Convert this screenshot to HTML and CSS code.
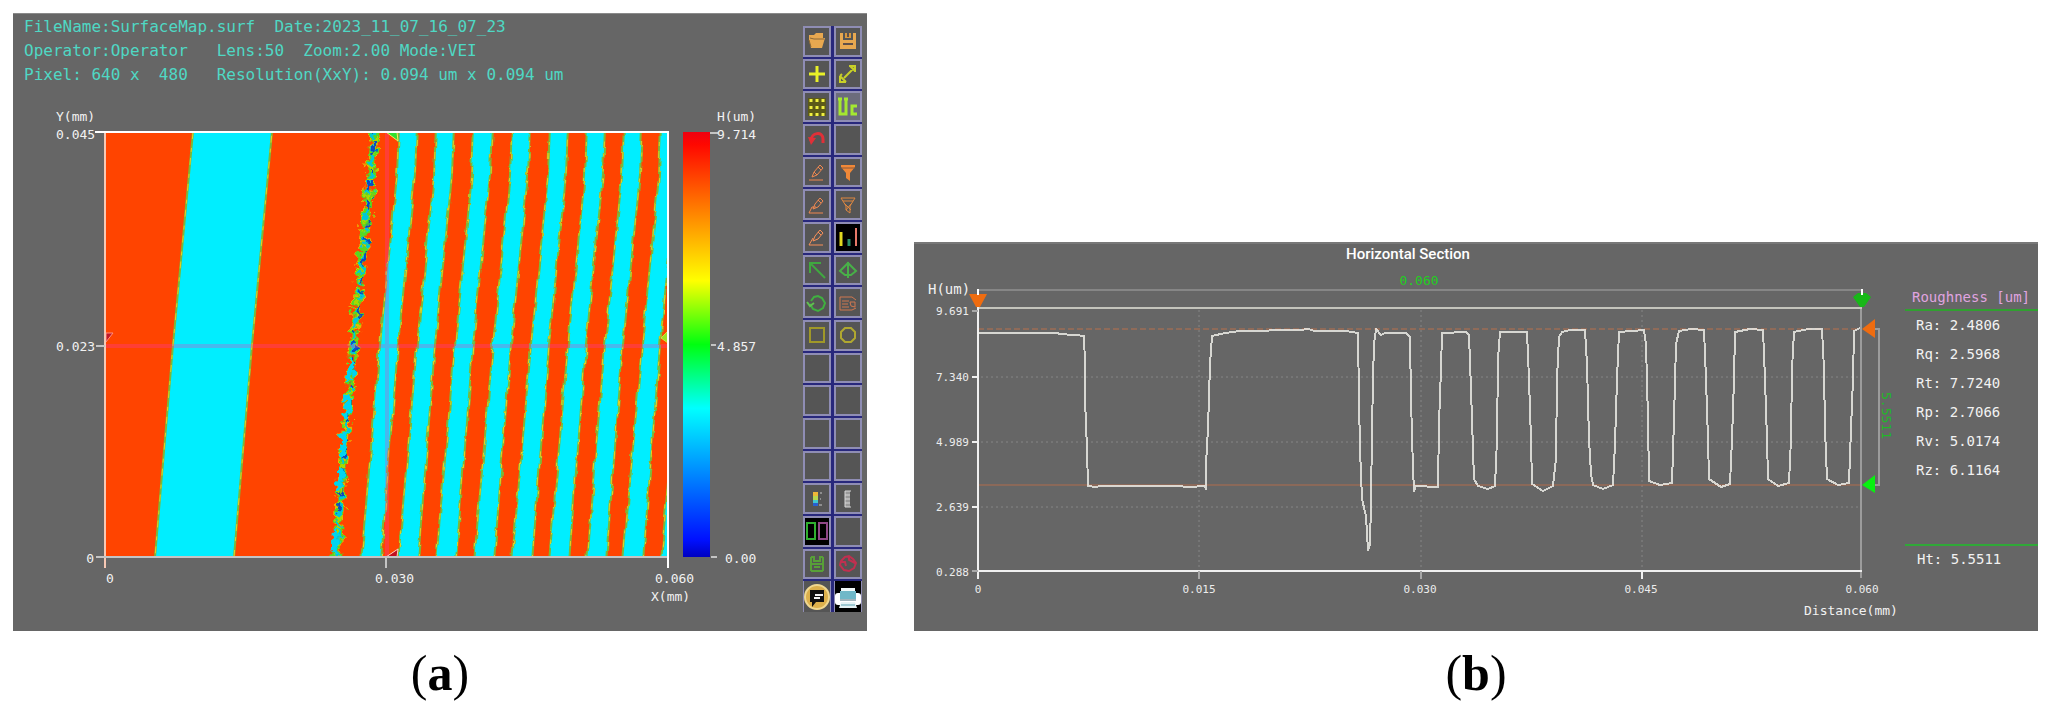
FILE: index.html
```html
<!DOCTYPE html>
<html lang="en">
<head>
<meta charset="utf-8">
<title>Surface map and horizontal section</title>
<link rel="stylesheet" href="styles.css">
</head>
<body>
<main class="figures">
  <figure class="figure figure-map">
    <div class="panel map-panel">
      <div class="map-main">
        <pre class="meta">FileName:SurfaceMap.surf  Date:2023_11_07_16_07_23
Operator:Operator   Lens:50  Zoom:2.00 Mode:VEI
Pixel: 640 x  480   Resolution(XxY): 0.094 um x 0.094 um</pre>
        <svg class="plot" viewBox="13 87 790 544" role="img" aria-label="Height map">
          <defs>
            <linearGradient id="heat" x1="0" y1="0" x2="0" y2="1">
              <stop offset="0" stop-color="#f00010"/>
              <stop offset=".03" stop-color="#ff0800"/>
              <stop offset=".35" stop-color="#ffff00"/>
              <stop offset=".5" stop-color="#00ff10"/>
              <stop offset=".65" stop-color="#00ffff"/>
              <stop offset=".96" stop-color="#0010ff"/>
              <stop offset="1" stop-color="#0000c0"/>
            </linearGradient>
            <clipPath id="area"><rect x="106" y="132" width="562" height="425"/></clipPath>
            <filter id="rough" x="-20%" y="-5%" width="140%" height="110%">
              <feTurbulence type="fractalNoise" baseFrequency=".06" numOctaves="2" seed="4"/>
              <feDisplacementMap in="SourceGraphic" scale="5" xChannelSelector="R" yChannelSelector="G"/>
            </filter>
            <filter id="rougher" x="-50%" y="-5%" width="200%" height="110%">
              <feTurbulence type="fractalNoise" baseFrequency=".15" numOctaves="2" seed="9"/>
              <feDisplacementMap in="SourceGraphic" scale="14" xChannelSelector="R" yChannelSelector="G"/>
            </filter>
            <g id="stripe">
              <path class="cold" d="M399 126L397 175L380 345L361 562H381L398 345L415 175L417 126Z"/>
              <path class="edge-g" d="M399 126L397 175L380 345L361 562M381 562L398 345L415 175L417 126"/>
              <path class="edge-y" d="M399 126L397 175L380 345L361 562M381 562L398 345L415 175L417 126"/>
            </g>
          </defs>
          <g clip-path="url(#area)">
            <rect class="hot" x="105" y="132" width="563" height="425"/>
            <path class="cold" d="M193 132L173 345L155 557H234L252 345L272 132Z"/>
            <path class="edge-g" d="M193 132L173 345L155 557M234 557L252 345L272 132"/>
            <path class="edge-y" d="M193 132L173 345L155 557M234 557L252 345L272 132"/>
            <g filter="url(#rough)">
              <use href="#stripe"/>
              <use href="#stripe" x="37"/>
              <use href="#stripe" x="75"/>
              <use href="#stripe" x="113"/>
              <use href="#stripe" x="151"/>
              <use href="#stripe" x="188"/>
              <use href="#stripe" x="225"/>
              <use href="#stripe" x="262"/>
              <use href="#stripe" x="300"/>
            </g>
            <g filter="url(#rougher)" fill="none">
              <path d="M376 128L364 240L355 330L344 450L336 560" stroke="#e8b800" stroke-width="10" stroke-dasharray="4 3 7 5 2 6"/>
              <path d="M376 128L364 240L355 330L344 450L336 560" stroke="#58d820" stroke-width="8" stroke-dasharray="11 1 6 2"/>
              <path d="M376 128L364 240L355 330L344 450L336 560" stroke="#a8d800" stroke-width="5" stroke-dasharray="4 7 9 5"/>
              <path d="M375 128L365 240L355 330L345 450L336 560" stroke="#00c8d8" stroke-width="4" stroke-dasharray="12 5 6 4"/>
              <path d="M375 128L366 240L356 330L346 450L337 520" stroke="#0848c0" stroke-width="3" stroke-dasharray="7 9 12 14 4 8"/>
              <path d="M352 360L343 450L339 500M336 530L334 560" stroke="#00d4f0" stroke-width="6" stroke-dasharray="22 14"/>
            </g>
            <path class="cross" d="M106 346H668M387 132V557"/>
            <path d="M386 132L398 141L397 132Z" fill="#30e030" stroke="#f0f060"/>
            <path d="M667 332L661 338L668 343" fill="#a0e020" stroke="#d0e040"/>
            <path d="M106 333H113L106 342Z" fill="#c01828" stroke="#ff9080"/>
            <path d="M386 557L398 549L397 557Z" fill="#c01020" stroke="#ffd0c0"/>
          </g>
          <path d="M105 132V568" stroke="#f6c8b4" stroke-width="2"/>
          <path d="M96 346H105M96 557H668M386 557V568M710 133H718M711 345H716M711 557H717" stroke="#c4c4c4" stroke-width="2"/>
          <path d="M95 132H668V568" fill="none" stroke="#fff" stroke-width="2"/>
          <rect x="683" y="132" width="27" height="425" fill="url(#heat)"/>
          <g class="ticks">
            <text x="56" y="121">Y(mm)</text>
            <text x="56" y="139">0.045</text>
            <text x="56" y="351">0.023</text>
            <text x="94" y="563" text-anchor="end">0</text>
            <text x="106" y="583">0</text>
            <text x="375" y="583">0.030</text>
            <text x="655" y="583">0.060</text>
            <text x="651" y="601">X(mm)</text>
            <text x="717" y="121">H(um)</text>
            <text x="717" y="139">9.714</text>
            <text x="717" y="351">4.857</text>
            <text x="725" y="563">0.00</text>
          </g>
        </svg>
      </div>
      <div class="toolbar" role="toolbar" aria-label="Tools">
        <button aria-label="Open"><svg viewBox="0 0 22 22"><path d="M3 5H8L10 3H17V8H19L16 18H5L3 10Z" fill="#e8a850"/><path d="M4 8L8 9H18M5 17L3 10" fill="none" stroke="#8a6838"/></svg></button>
        <button aria-label="Save"><svg viewBox="0 0 22 22"><path d="M3 3H6V10H16V3H19V19H3Z" fill="#e8a850"/><path d="M8 3H14V8H8Z" fill="#d89840"/><path d="M11 3V7M6 14H16" stroke="#60504a" stroke-width="2"/></svg></button>
        <button aria-label="Add"><svg viewBox="0 0 22 22"><path d="M11 3V19M3 11H19" stroke="#e8f028" stroke-width="3"/></svg></button>
        <button aria-label="Measure"><svg viewBox="0 0 22 22"><path d="M7 15L17 5M12 3H18V9M3 13V19H9M3 13L9 19M5 11L3 13M13 3L18 8" fill="none" stroke="#c8d028" stroke-width="2"/></svg></button>
        <button aria-label="Grid"><svg viewBox="0 0 22 22"><path d="M2 2H20V20H2Z" fill="#5c5a18"/><path d="M5 3V20M11 3V20M17 3V20" stroke="#f0f040" stroke-width="3" stroke-dasharray="3 4"/></svg></button>
        <button aria-label="Uniformity" class="lit"><svg viewBox="0 0 22 22"><path d="M3 3V18H9V3M1 3H5M7 3H11M20 10H15V18H20" fill="none" stroke="#a4e830" stroke-width="3"/></svg></button>
        <button aria-label="Undo"><svg viewBox="0 0 22 22"><path d="M5 13C5 4 17 3 17 11V15" fill="none" stroke="#e03038" stroke-width="3"/><path d="M2 9L10 10L5 17Z" fill="#e03038"/></svg></button>
        <button aria-label="Empty slot 1"></button>
        <button aria-label="Edit line"><svg viewBox="0 0 22 22"><path d="M3 19H17M6 16L8 11L14 4L17 7L11 14L6 16M8 11L11 14M12 6L15 9" fill="none" stroke="#f08850" stroke-width="1"/></svg></button>
        <button aria-label="Filter"><svg viewBox="0 0 22 22"><path d="M4 4H18V6L13 12V20L9 17V12L4 6Z" fill="#f08838"/><path d="M4 7H18" stroke="#8a5838"/></svg></button>
        <button aria-label="Edit step"><svg viewBox="0 0 22 22"><path d="M3 19H17M3 19L6 13H10M7 15L9 10L14 4L17 7L12 13L7 15M12 6L15 9" fill="none" stroke="#f08850"/></svg></button>
        <button aria-label="Clear filter"><svg viewBox="0 0 22 22"><path d="M4 4H18L13 12V19L9 16V12ZM6 7H16M8 10L14 16M14 10L9 16" fill="none" stroke="#e08840"/></svg></button>
        <button aria-label="Edit angle"><svg viewBox="0 0 22 22"><path d="M3 19H17M3 19L7 12M7 15L9 10L14 4L17 7L12 13L7 15M12 6L15 9" fill="none" stroke="#f89058"/></svg></button>
        <button aria-label="Histogram" class="dark"><svg viewBox="0 0 22 22"><path d="M4 6V20" stroke="#e0d820" stroke-width="3"/><path d="M12 13V20" stroke="#289068" stroke-width="3"/><path d="M19 2V20" stroke="#e87868" stroke-width="2"/></svg></button>
        <button aria-label="Origin"><svg viewBox="0 0 22 22"><path d="M4 14V4H15M4 4L19 19" fill="none" stroke="#40a840" stroke-width="2"/></svg></button>
        <button aria-label="Mirror"><svg viewBox="0 0 22 22"><path d="M11 3V19M11 4L3 12L8 16H14L19 12Z" fill="none" stroke="#48b048" stroke-width="2"/></svg></button>
        <button aria-label="Rotate"><svg viewBox="0 0 22 22"><path d="M5 9L8 5L12 4L16 6L19 11L17 16L12 19L7 17L4 12" fill="none" stroke="#40b040" stroke-width="2"/><path d="M1 10L4 14L8 11" fill="none" stroke="#60c050" stroke-width="2"/></svg></button>
        <button aria-label="List"><svg viewBox="0 0 22 22"><path d="M3 5H15L19 8M3 5V18H15M5 9H12M5 12H11M5 15H12M13 10H18V15L14 14ZM15 18L19 16" fill="none" stroke="#d07850"/></svg></button>
        <button aria-label="Rectangle"><svg viewBox="0 0 22 22"><path d="M4 4H18V18H4Z" fill="none" stroke="#a09828" stroke-width="2"/></svg></button>
        <button aria-label="Circle"><svg viewBox="0 0 22 22"><path d="M8 4H14L18 8V14L14 18H8L4 14V8Z" fill="none" stroke="#b0a830" stroke-width="2"/></svg></button>
        <button aria-label="Empty slot 2"></button>
        <button aria-label="Empty slot 3"></button>
        <button aria-label="Empty slot 4"></button>
        <button aria-label="Empty slot 5"></button>
        <button aria-label="Empty slot 6"></button>
        <button aria-label="Empty slot 7"></button>
        <button aria-label="Empty slot 8"></button>
        <button aria-label="Empty slot 9"></button>
        <button aria-label="Colour scale"><svg viewBox="0 0 22 22"><path d="M7 4H12V8H7Z" fill="#f0b838"/><path d="M7 8H12V12H7Z" fill="#b8d850"/><path d="M7 12H12V15H7Z" fill="#40c8d0"/><path d="M7 15H12V18H7Z" fill="#2860d0"/><path d="M14 5H16M14 11H15M13 17H16" stroke="#c8c8c8"/></svg></button>
        <button aria-label="Grey scale"><svg viewBox="0 0 22 22"><path d="M8 3H13V19H8Z" fill="#999"/><path d="M8 3V19M8 3H14M8 7H13M8 11H13M8 15H13M8 19H14" stroke="#d8d8d8"/></svg></button>
        <button aria-label="Compare" class="dark"><svg viewBox="0 0 22 22"><path d="M1 3H9V19H1Z" fill="none" stroke="#30b030" stroke-width="2"/><path d="M13 3H21V19H13Z" fill="none" stroke="#904888" stroke-width="2"/></svg></button>
        <button aria-label="Empty slot 10"></button>
        <button aria-label="Store"><svg viewBox="0 0 22 22"><path d="M5 4V18M17 4V18M5 4H8V8H14V4H17M5 11H17M5 18H17M8 14H14" fill="none" stroke="#58a038" stroke-width="2"/></svg></button>
        <button aria-label="Stop"><svg viewBox="0 0 22 22"><path d="M8 4L12 3L16 6L19 10L17 15L12 18L7 17L3 12L4 8ZM12 3L12 7L18 10M4 9H8L9 13" fill="none" stroke="#c03050" stroke-width="2"/></svg></button>
        <button aria-label="Comment" class="wide"><svg viewBox="0 0 26 28"><circle cx="13" cy="14" r="12" fill="#dcb04c" stroke="#f0d890" stroke-width="2"/><path d="M6 7H20V19H12L8 24V19H6Z" fill="#101010"/><path d="M11 12H19M10 15H16" stroke="#f4f4f4" stroke-width="2"/></svg></button>
        <button aria-label="Print" class="wide dark"><svg viewBox="0 0 26 28"><rect x="6" y="5" width="14" height="8" fill="#f0f8f8"/><rect x="0" y="10" width="26" height="12" rx="3" fill="#fff"/><rect x="5" y="8" width="16" height="8" fill="#70b8c8"/><path d="M5 17H21" stroke="#406878"/><path d="M6 19H20L22 25H4Z" fill="#e4f2f4"/><path d="M6 22H20" stroke="#58a0b0"/></svg></button>
      </div>
    </div>
    <figcaption class="caption">(<b>a</b>)</figcaption>
  </figure>

  <figure class="figure figure-section">
    <div class="panel section-panel">
      <svg class="plot" viewBox="914 243 991 389" role="img" aria-label="Horizontal section profile">
        <text class="title" x="1408" y="260" text-anchor="middle">Horizontal Section</text>
        <text class="green" x="1419" y="286" text-anchor="middle">0.060</text>
        <path class="grid" d="M981 378H1861M981 443H1861M981 508H1861M1199 311V572M1421 311V572M1642 311V572"/>
        <path class="limit" d="M978 330H1861"/>
        <path class="limit low" d="M978 486H1861"/>
        <path d="M978 291H1862" stroke="#868686" stroke-width="2"/>
        <path d="M1861 309V579M1879 330V485M1875 330H1880M1875 486H1880" stroke="#9c9c9c" stroke-width="2"/>
        <path d="M978 309H1862" stroke="#c4c4bc" stroke-width="2"/>
        <path d="M978 290V580M978 572H1862M972 378H978M972 443H978M972 508H978M1642 572V580M1862 290V296" stroke="#f0f0f0" stroke-width="2"/>
        <path d="M972 312H978M972 572H978M1199 572V580M1421 572V580" stroke="#a8a8a8" stroke-width="2"/>
        <polyline class="profile" points="978,334 1058,334 1059,335 1075,336 1084,337 1085,365 1085,400 1087,450 1088,487 1096,488 1100,487 1175,487 1190,488 1205,487 1206,490 1206,465 1208,430 1210,365 1212,337 1225,334 1240,332 1300,331 1308,330 1315,332 1346,332 1358,334 1359,400 1360,450 1362,500 1366,517 1368,551 1370,545 1371,504 1372,432 1373,380 1374,345 1376,330 1381,336 1385,334 1406,334 1410,338 1411,400 1413,470 1414,492 1416,487 1438,488 1439,425 1441,370 1442,334 1466,333 1469,336 1471,390 1473,450 1474,480 1478,487 1488,490 1495,487 1497,440 1498,360 1500,333 1527,333 1529,380 1531,440 1532,485 1543,492 1553,487 1556,460 1557,380 1559,338 1562,333 1570,331 1585,331 1587,365 1589,440 1591,475 1593,486 1603,490 1613,486 1615,445 1617,380 1619,333 1644,331 1646,345 1648,420 1649,482 1660,486 1672,484 1674,420 1676,345 1679,332 1691,330 1704,331 1706,380 1708,440 1709,480 1721,488 1730,485 1732,440 1734,380 1735,333 1750,330 1763,331 1765,380 1767,440 1768,480 1778,487 1789,484 1791,440 1792,370 1794,333 1808,330 1822,330 1824,370 1825,430 1827,480 1838,486 1849,484 1851,430 1853,380 1854,332 1860,329"/>
        <path d="M969 295H987L980 308H976Z" fill="#ee6c10"/>
        <path d="M978 290V296" stroke="#fff" stroke-width="2"/>
        <path d="M1853 298L1858 294H1866L1871 298L1864 308H1860Z" fill="#18b818"/>
        <path d="M1862 290V296" stroke="#fff" stroke-width="2"/>
        <path d="M1862 330L1875 320V339Z" fill="#ee6c10"/>
        <path d="M1862 486L1875 476V494Z" fill="#08f010"/>
        <text class="green side" transform="translate(1882 393) rotate(90)">5.5511</text>
        <text class="unit" x="928" y="295">H(um)</text>
        <g class="small" text-anchor="end">
          <text x="969" y="316">9.691</text>
          <text x="969" y="382">7.340</text>
          <text x="969" y="447">4.989</text>
          <text x="969" y="512">2.639</text>
          <text x="969" y="577">0.288</text>
        </g>
        <g class="small" text-anchor="middle">
          <text x="978" y="594">0</text>
          <text x="1199" y="594">0.015</text>
          <text x="1420" y="594">0.030</text>
          <text x="1641" y="594">0.045</text>
          <text x="1862" y="594">0.060</text>
        </g>
        <g class="ticks"><text x="1804" y="616">Distance(mm)</text></g>
      </svg>
      <section class="readout">
        <h2 class="readout-title">Roughness [um]</h2>
        <ul class="values">
          <li>Ra: 2.4806</li>
          <li>Rq: 2.5968</li>
          <li>Rt: 7.7240</li>
          <li>Rp: 2.7066</li>
          <li>Rv: 5.0174</li>
          <li>Rz: 6.1164</li>
        </ul>
        <p class="height">Ht: 5.5511</p>
      </section>
    </div>
    <figcaption class="caption">(<b>b</b>)</figcaption>
  </figure>
</main>
</body>
</html>
```
FILE: styles.css
```css
* { box-sizing: border-box; }
body { margin: 0; background: #fff; color: #000; }
.figures { display: flex; align-items: flex-end; gap: 47px; padding: 13px 17px 0 13px; }
.figure { margin: 0; min-width: 0; }
.figure-map { flex: 854 1 0; }
.figure-section { flex: 1124 1 0; }
.panel { display: flex; background: #666; font-family: "DejaVu Sans Mono", monospace; }
.caption { font: 50px/60px "Liberation Serif", serif; text-align: center; padding: 12px 0 6px; }

.map-panel { padding: 2px 5px 0 0; box-shadow: inset 0 1px 0 #8a8a8a; }
.map-main { flex: 1; min-width: 0; }
.meta { margin: 0; padding-left: 11px; font: 16px/24px "DejaVu Sans Mono", monospace; color: #4fd8c4; }
.plot { display: block; width: 100%; height: auto; }
.hot { fill: #ff4400; }
.cold { fill: #00eeff; }
.edge-g { fill: none; stroke: #7cb838; stroke-width: 2; }
.edge-y { fill: none; stroke: #e8d020; stroke-width: 1; stroke-dasharray: 7 9 4 6; }
.cross { fill: none; stroke: #ff30c0; stroke-opacity: .28; stroke-width: 4; }
.ticks text { font-size: 13px; fill: #f2f2f2; }

.toolbar { display: grid; grid-template-columns: 28px 28px; grid-auto-rows: 1fr; gap: 2px 3px; width: 59px; margin: 11px 0 19px; background: #28287c; }
.toolbar button { display: flex; align-items: center; justify-content: center; min-width: 0; min-height: 0; margin: 0; padding: 0; border: 2px solid #8f8db4; background: #555; }
.toolbar svg { width: 22px; height: 22px; }
.toolbar .lit { background: #6c6c7c; }
.toolbar .dark { background: #000; }
.toolbar .wide { border-width: 0 1px; }
.toolbar .wide svg { width: 26px; height: 28px; }

.section-panel { box-shadow: inset 0 2px 0 #787878; }
.section-panel .plot { flex: 991 1 0; min-width: 0; }
.readout { flex: 133 1 0; min-width: 0; padding-top: 43px; color: #f2f2f2; font-size: 14px; white-space: nowrap; }
.readout-title { margin: 0; padding: 0 0 0 7px; font-size: 14px; font-weight: 400; line-height: 24px; color: #e0a4e0; border-bottom: 2px solid #30a030; }
.values { list-style: none; margin: 0; padding: 0 0 0 11px; line-height: 29px; }
.height { margin: 59px 0 0; padding-left: 12px; line-height: 26px; border-top: 2px solid #30a838; }
.title { font: 500 15px Roboto, sans-serif; fill: #fff; }
.green { font-size: 13px; fill: #20d020; }
.green.side { fill: #20b828; }
.unit { font-size: 14px; fill: #f2f2f2; }
.small text { font-size: 11px; fill: #ececec; }
.grid { fill: none; stroke: #858585; stroke-dasharray: 2 3; }
.limit { stroke: #b8704c; stroke-dasharray: 6 3; }
.low { stroke-dasharray: none; stroke: #b06c4c; }
.profile { fill: none; stroke: #f4f4ee; stroke-opacity: .8; stroke-width: 2; stroke-linejoin: round; shape-rendering: crispEdges; }
```
